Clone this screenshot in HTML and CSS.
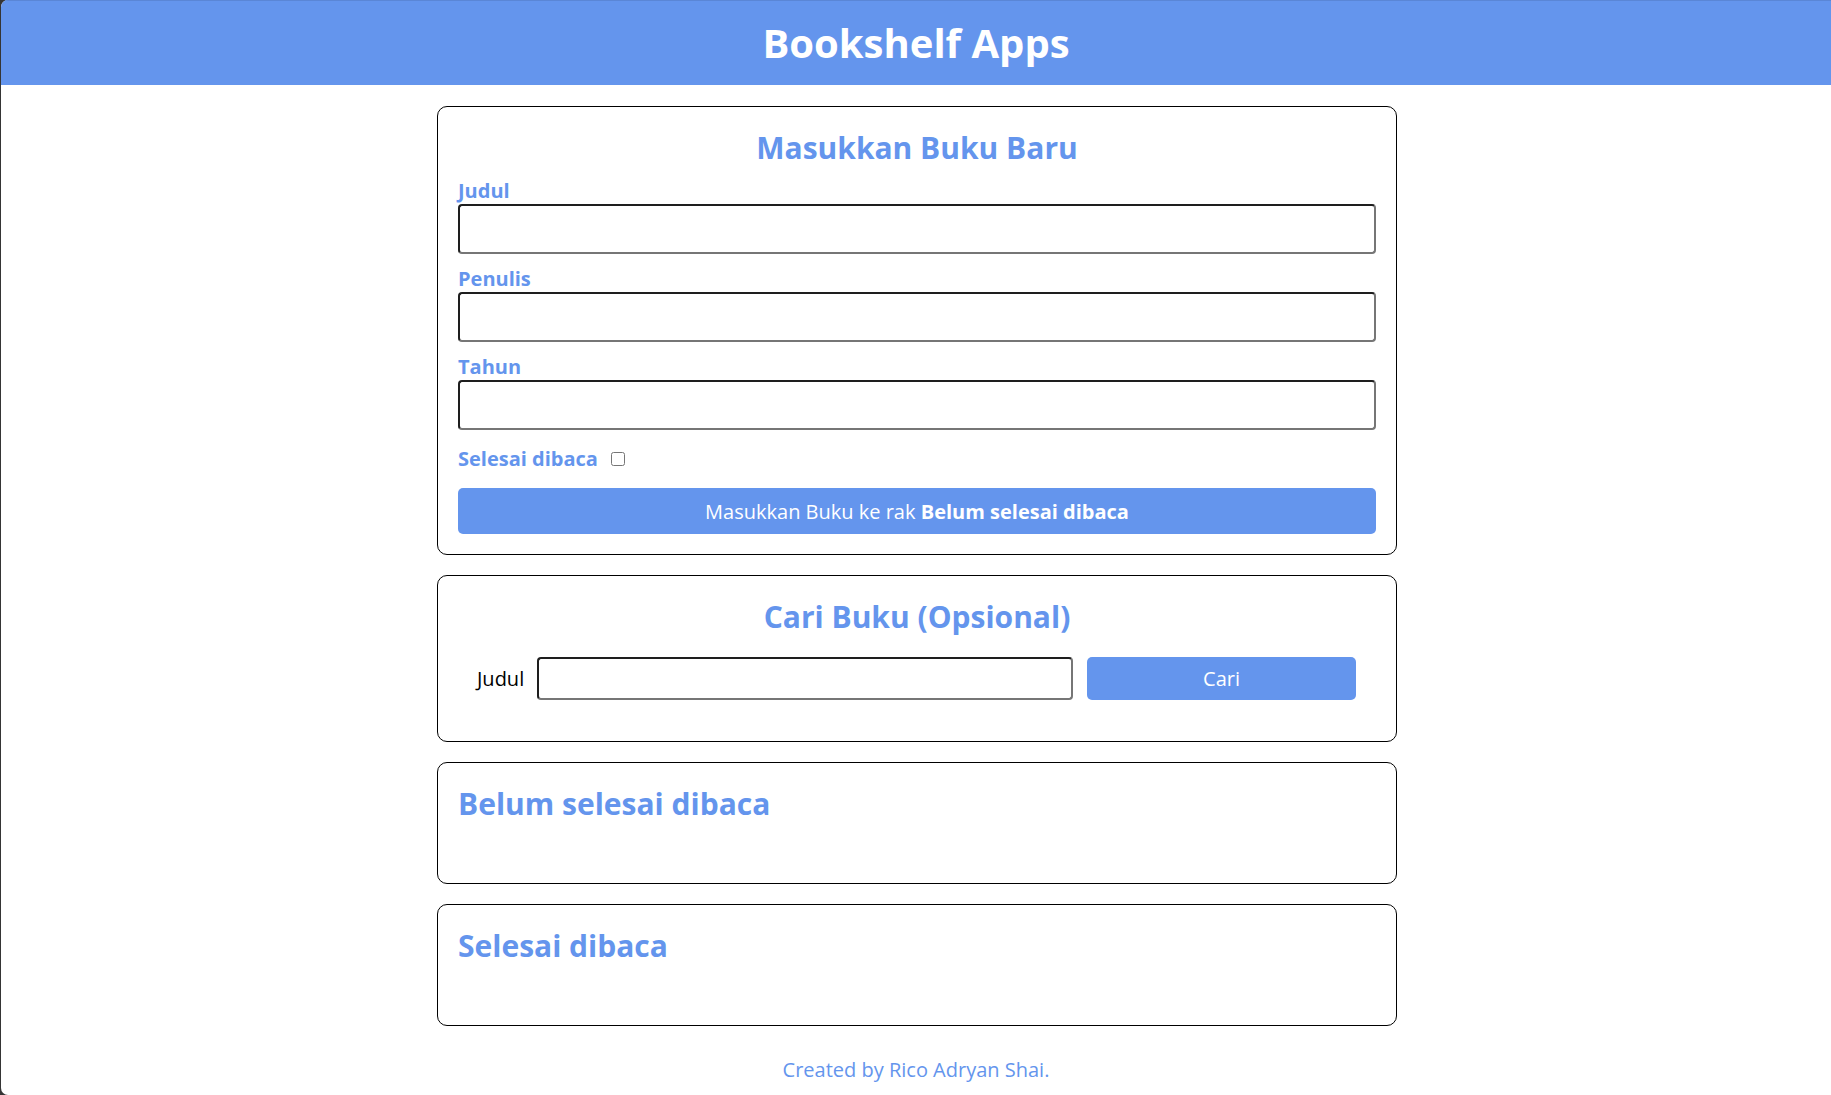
FILE: index.html
```html
<!DOCTYPE html>
<html lang="id">
<head>
<meta charset="utf-8">
<title>Bookshelf Apps</title>
<link rel="stylesheet" href="styles.css">
</head>
<body>
<div class="window">
  <header class="app-header">
    <h1 class="app-title">Bookshelf Apps</h1>
  </header>

  <main class="content">
    <section class="card">
      <h2 class="card-title centered">Masukkan Buku Baru</h2>
      <form class="book-form">
        <div class="field">
          <label class="field-label" for="inputBookTitle">Judul</label>
          <input class="text-input" id="inputBookTitle" type="text">
        </div>
        <div class="field">
          <label class="field-label" for="inputBookAuthor">Penulis</label>
          <input class="text-input" id="inputBookAuthor" type="text">
        </div>
        <div class="field last">
          <label class="field-label" for="inputBookYear">Tahun</label>
          <input class="text-input" id="inputBookYear" type="number">
        </div>
        <div class="check-field">
          <label class="field-label" for="inputBookIsComplete">Selesai dibaca</label>
          <input class="check-input" id="inputBookIsComplete" type="checkbox">
        </div>
        <button class="primary-button submit-button" type="button">Masukkan Buku ke rak <b>Belum selesai dibaca</b></button>
      </form>
    </section>

    <section class="card">
      <h2 class="card-title centered">Cari Buku (Opsional)</h2>
      <form class="search-form">
        <label class="search-label" for="searchBookTitle">Judul</label>
        <input class="text-input search-input" id="searchBookTitle" type="text">
        <button class="primary-button search-button" type="button">Cari</button>
      </form>
    </section>

    <section class="card">
      <h2 class="card-title">Belum selesai dibaca</h2>
      <div class="book-list"></div>
    </section>

    <section class="card">
      <h2 class="card-title">Selesai dibaca</h2>
      <div class="book-list"></div>
    </section>
  </main>

  <footer class="app-footer">Created by Rico Adryan Shai.</footer>
</div>
</body>
</html>
```

FILE: styles.css
```css
* {
  box-sizing: border-box;
}

html,
body {
  margin: 0;
  height: 100%;
  overflow: hidden;
  background: #353535;
}

body {
  font-family: "Open Sans", "Noto Sans", sans-serif;
  font-size: 20px;
}

.window {
  margin-left: 1px;
  height: 100vh;
  background: #ffffff;
  border-radius: 7px 0 0 7px;
  overflow: hidden;
}

.app-header {
  background: #6495ed;
  border-top: 1px solid #5a86d6;
  height: 85px;
  padding-top: 14px;
  text-align: center;
}

.app-title {
  margin: 0;
  color: #ffffff;
  font-size: 40px;
  font-weight: 700;
  line-height: normal;
}

.content {
  width: 960px;
  margin: 21px 0 0 calc(50% - 479px);
  display: flex;
  flex-direction: column;
  gap: 20px;
}

.card {
  border: 1px solid #000000;
  border-radius: 10px;
  padding: 20px;
}

.card-title {
  margin: 0;
  color: #6495ed;
  font-size: 30px;
  font-weight: 700;
  line-height: normal;
}

.card-title.centered {
  text-align: center;
  margin-bottom: 9px;
}

.book-form {
  display: flex;
  flex-direction: column;
}

.field {
  display: flex;
  flex-direction: column;
  margin-bottom: 11px;
}

.field.last {
  margin-bottom: 15px;
}

.field-label {
  color: #6495ed;
  font-weight: 700;
  line-height: normal;
}

.text-input {
  height: 50px;
  margin: 0;
  padding: 0 10px;
  font-family: inherit;
  font-size: 20px;
  background: #ffffff;
  border: 2px solid;
  border-color: #1e1e1e #767676 #767676 #1e1e1e;
  border-radius: 4px;
  outline: none;
}

.check-field {
  display: flex;
  align-items: center;
  gap: 13px;
  margin-bottom: 16px;
}

.check-input {
  width: 14px;
  height: 14px;
  margin: 1px 0 0;
}

.primary-button {
  margin: 0;
  border: 0;
  border-radius: 5px;
  background: #6495ed;
  color: #ffffff;
  font-family: inherit;
  font-size: 20px;
  font-weight: 400;
  cursor: pointer;
}

.primary-button b {
  font-weight: 700;
}

.submit-button {
  height: 46px;
}

.search-form {
  display: flex;
  align-items: center;
  margin: 20px 0 21px;
  padding: 0 20px 0 19px;
}

.search-label {
  color: #000000;
  margin-right: 13px;
  line-height: normal;
}

.search-input {
  flex: 1;
  height: 43px;
}

.search-button {
  width: 269px;
  height: 43px;
  margin-left: 14px;
}

.book-list {
  height: 39px;
}

.app-footer {
  margin-top: 30px;
  text-align: center;
  color: #6495ed;
  line-height: normal;
}
```
